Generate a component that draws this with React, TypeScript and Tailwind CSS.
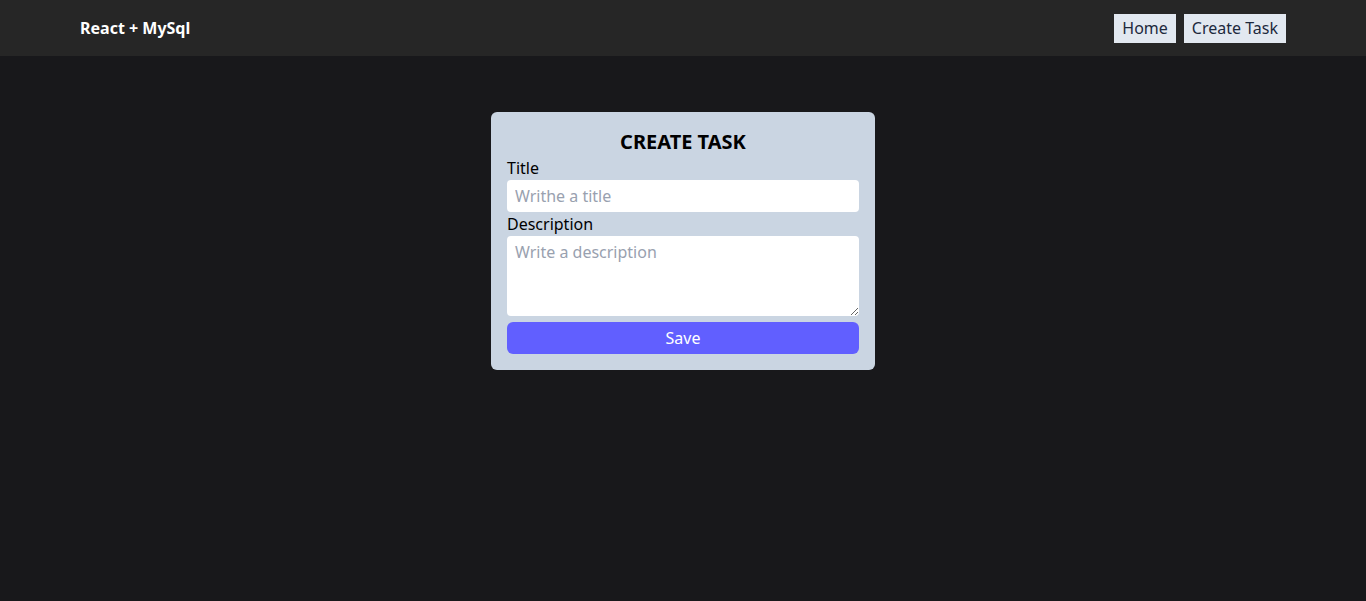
export default function App() {
  return (
    <div
      className="min-h-screen bg-[#18181b]"
      style={{ fontFamily: '"Segoe UI", "Noto Sans", sans-serif' }}
    >
      <nav className="flex h-14 items-center justify-between bg-[#262626] px-20">
        <a href="#" className="font-bold text-white">
          React + MySql
        </a>
        <ul className="flex gap-2">
          <li>
            <a href="#" className="flex h-[29px] items-center bg-slate-200 px-2 text-slate-800">
              Home
            </a>
          </li>
          <li>
            <a href="#" className="flex h-[29px] items-center bg-slate-200 px-2 text-slate-800">
              Create Task
            </a>
          </li>
        </ul>
      </nav>

      <div className="flex justify-center pt-14">
        <form className="w-96 rounded-md bg-slate-300 p-4">
          <h1 className="text-center text-xl font-bold uppercase">Create Task</h1>
          <label className="block">Title</label>
          <input
            type="text"
            placeholder="Writhe a title"
            className="w-full rounded-sm bg-white px-2 py-1 outline-none placeholder:text-gray-400"
          />
          <label className="block">Description</label>
          <textarea
            rows={3}
            placeholder="Write a description"
            className="w-full rounded-sm bg-white px-2 py-1 align-top outline-none placeholder:text-gray-400"
          ></textarea>
          <button
            type="button"
            className="mt-1.5 block w-full rounded-md bg-indigo-500 py-1 text-white"
          >
            Save
          </button>
        </form>
      </div>
    </div>
  )
}
